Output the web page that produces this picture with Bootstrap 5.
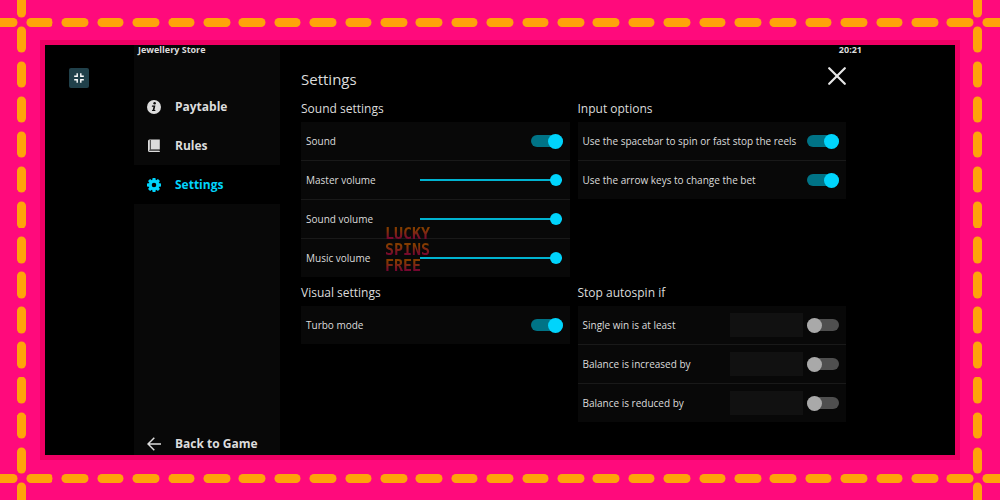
<!DOCTYPE html>
<html lang="en">
<head>
<meta charset="utf-8">
<meta name="viewport" content="width=device-width, initial-scale=1">
<title>Jewellery Store – Settings</title>
<link href="https://cdn.jsdelivr.net/npm/bootstrap@5.3.0/dist/css/bootstrap.min.css" rel="stylesheet">
<style>
  :root {
    --accent: #00d4fc;
    --panel: #080808;
    --dash-h: url("data:image/svg+xml,%3Csvg xmlns='http://www.w3.org/2000/svg' viewBox='0 0 36 9' preserveAspectRatio='none'%3E%3Crect x='4.5' width='27' height='9' rx='4.5' fill='%23ffa30a'/%3E%3C/svg%3E");
    --dash-v: url("data:image/svg+xml,%3Csvg xmlns='http://www.w3.org/2000/svg' viewBox='0 0 9 36' preserveAspectRatio='none'%3E%3Crect y='4.5' width='9' height='27' rx='4.5' fill='%23ffa30a'/%3E%3C/svg%3E");
  }
  body {
    font-family: "Open Sans", "Noto Sans", sans-serif;
    font-size: 10px;
    line-height: 16px;
    color: #dcdcdc;
  }
  /* Stitched frame: whole stitches are fitted between the corner crossings */
  .stitched {
    padding: 22px;
    background-color: #ff0a7c;
    background-image: var(--dash-h), var(--dash-h), var(--dash-v), var(--dash-v);
    background-origin: content-box;
    background-size: 35px 9px, 35px 9px, 9px 35px, 9px 35px;
    background-position: 0 -4px, 0 calc(100% + 5px), -5px 0, calc(100% + 4px) 0;
    background-repeat: round no-repeat, round no-repeat, no-repeat round, no-repeat round;
  }
  .screen { margin: 18px; border: 5px solid #ef0064; background: #000; }
  .gutter { flex: 1 1 0; padding: 23px 0 0 24px; }
  .app { flex: 0 1 732px; }
  .shrink-btn { width: 20px; height: 20px; background: #20404a; border-radius: 2px; }
  .side { width: 146px; flex: none; background: var(--panel); }
  .tiny { font-size: 9px; line-height: 10px; font-weight: 700; }
  .side-nav { padding-top: 32px; }
  .side-link {
    display: flex; align-items: center; gap: 14px; height: 39px; padding-left: 13px;
    color: #dcdcdc; text-decoration: none; font-size: 12px; font-weight: 700; line-height: 18px;
  }
  .side-link.active { color: var(--accent); background: #000; }
  .back-link { height: 22px; }
  .content { padding: 12px 20px 0 21px; }
  .page-title { font-size: 15px; line-height: 24px; font-weight: 400; margin-bottom: 5px; }
  .group-title { font-size: 12px; line-height: 26px; font-weight: 400; margin: 0; }
  .groups { --bs-gutter-y: 3px; }
  .option-list { background: var(--panel); }
  .option { height: 39px; padding: 0 7px 0 5px; border-bottom: 1px solid #191919; }
  .option:last-child { height: 38px; border-bottom: 0; }
  .toggle {
    appearance: none; display: flex; align-items: center; flex: none;
    width: 32px; height: 12px; margin: 0; border-radius: 6px; background: #4f4f4f;
  }
  .toggle::before { content: ""; width: 15px; height: 15px; border-radius: 50%; background: #a9a9a9; flex: none; }
  .toggle:checked { background: #007386; justify-content: flex-end; }
  .toggle:checked::before { background: var(--accent); }
  .volume { appearance: none; width: 142px; height: 12px; margin: 0 1px 0 0; background: none; }
  .volume::-webkit-slider-runnable-track { height: 2px; background: #00b3d0; }
  .volume::-webkit-slider-thumb { appearance: none; width: 12px; height: 12px; margin-top: -5px; border-radius: 50%; background: var(--accent); }
  .amount { width: 73px; height: 24px; border: 0; background: #111; color: inherit; margin-right: 4px; padding: 0 4px; }
  .stamp { top: 104px; left: 84px; font: 700 15px/16px "DejaVu Sans Mono", monospace; pointer-events: none; }
  .stamp span { display: block; color: transparent; background: linear-gradient(#843c00 20%, #740035 85%); -webkit-background-clip: text; background-clip: text; }
</style>
</head>
<body>
<div class="stitched min-vh-100 d-flex flex-column">
<div class="screen flex-fill d-flex">
  <div class="gutter">
    <button type="button" class="shrink-btn border-0 p-0 d-flex align-items-center justify-content-center" aria-label="Exit full screen">
      <svg width="12" height="12" viewBox="0 0 12 12" fill="none" stroke="#fff" stroke-width="1.4"><path d="M4.200 1.200v3H1.200M7.800 1.200v3H10.800M4.200 10.800v-3H1.200M7.800 10.800v-3H10.800"/></svg>
    </button>
  </div>
  <div class="app d-flex">
    <aside class="side d-flex flex-column">
      <div class="tiny ps-1">Jewellery Store</div>
      <nav class="side-nav flex-fill d-flex flex-column">
        <a class="side-link" href="#paytable">
          <svg width="14" height="14" viewBox="0 0 14 14"><circle cx="7" cy="7" r="7" fill="currentColor"/><circle cx="7.600" cy="3.300" r="1.250" fill="#080808"/><path d="M5 5.600h3.400L7.400 10h1.100l-.3 1.100H4.900l.3-1.100h.5l.8-3.300H4.800z" fill="#080808"/></svg>
          Paytable</a>
        <a class="side-link" href="#rules">
          <svg width="14" height="14" viewBox="0 0 14 14"><path d="M2.500.5h10.300v10H3.200q-.9 0-.9.8t.9.8h9.600v1H2.700Q1 13.100 1 11.400V2Q1 .5 2.500.5z" fill="currentColor"/><path d="M3.300 1v9.500" stroke="#080808" stroke-width=".8"/><path d="M3 11.500h9.500" stroke="#777" stroke-width=".7"/></svg>
          Rules</a>
        <a class="side-link active" href="#settings" aria-current="page">
          <svg width="14" height="14" viewBox="-7 -7 14 14"><g fill="currentColor"><path d="M-1.400-7h2.800l.6 3h-4zM-1.400 7h2.800l.6-3h-4z"/><path d="M-1.400-7h2.800l.6 3h-4zM-1.400 7h2.800l.6-3h-4z" transform="rotate(45)"/><path d="M-1.400-7h2.800l.6 3h-4zM-1.400 7h2.800l.6-3h-4z" transform="rotate(90)"/><path d="M-1.400-7h2.800l.6 3h-4zM-1.400 7h2.800l.6-3h-4z" transform="rotate(135)"/></g><circle r="3.700" fill="none" stroke="currentColor" stroke-width="2.800"/></svg>
          Settings</a>
        <a class="side-link back-link mt-auto" href="#game">
          <svg width="14" height="14" viewBox="0 0 14 14" fill="none" stroke="currentColor" stroke-width="1.500"><path d="M14 7H1M7.300.7 1 7l6.300 6.300"/></svg>
          Back to Game</a>
      </nav>
    </aside>
    <main class="flex-fill">
      <div class="tiny text-end pe-1">20:21</div>
      <div class="content">
        <div class="d-flex justify-content-between align-items-start">
          <h1 class="page-title">Settings</h1>
          <button type="button" class="border-0 p-0 bg-transparent d-flex" aria-label="Close">
            <svg width="18" height="18" viewBox="0 0 18 18" stroke="#e6e6e6" stroke-width="2.200" stroke-linecap="round"><path d="M1.200 1.200l15.600 15.600M16.800 1.200 1.200 16.800"/></svg>
          </button>
        </div>
        <div class="row gx-2 groups">
          <section class="col-6">
            <h2 class="group-title">Sound settings</h2>
            <div class="option-list position-relative">
              <div class="stamp position-absolute"><span>LUCKY</span><span>SPINS</span><span>FREE</span></div>
              <div class="option d-flex align-items-center justify-content-between"><label for="sound">Sound</label><input class="toggle" type="checkbox" role="switch" id="sound" checked></div>
              <div class="option d-flex align-items-center justify-content-between"><label for="master">Master volume</label><input class="volume" type="range" id="master" value="100"></div>
              <div class="option d-flex align-items-center justify-content-between"><label for="svol">Sound volume</label><input class="volume" type="range" id="svol" value="100"></div>
              <div class="option d-flex align-items-center justify-content-between"><label for="mvol">Music volume</label><input class="volume" type="range" id="mvol" value="100"></div>
            </div>
          </section>
          <section class="col-6">
            <h2 class="group-title">Input options</h2>
            <div class="option-list">
              <div class="option d-flex align-items-center justify-content-between"><label for="space">Use the spacebar to spin or fast stop the reels</label><input class="toggle" type="checkbox" role="switch" id="space" checked></div>
              <div class="option d-flex align-items-center justify-content-between"><label for="arrows">Use the arrow keys to change the bet</label><input class="toggle" type="checkbox" role="switch" id="arrows" checked></div>
            </div>
          </section>
          <section class="col-6">
            <h2 class="group-title">Visual settings</h2>
            <div class="option-list">
              <div class="option d-flex align-items-center justify-content-between"><label for="turbo">Turbo mode</label><input class="toggle" type="checkbox" role="switch" id="turbo" checked></div>
            </div>
          </section>
          <section class="col-6">
            <h2 class="group-title">Stop autospin if</h2>
            <div class="option-list">
              <div class="option d-flex align-items-center"><label for="win" class="me-auto">Single win is at least</label><input class="amount" type="text" id="win"><input class="toggle" type="checkbox" role="switch" aria-label="Stop on single win"></div>
              <div class="option d-flex align-items-center"><label for="inc" class="me-auto">Balance is increased by</label><input class="amount" type="text" id="inc"><input class="toggle" type="checkbox" role="switch" aria-label="Stop on balance increase"></div>
              <div class="option d-flex align-items-center"><label for="red" class="me-auto">Balance is reduced by</label><input class="amount" type="text" id="red"><input class="toggle" type="checkbox" role="switch" aria-label="Stop on balance reduction"></div>
            </div>
          </section>
        </div>
      </div>
    </main>
  </div>
  <div class="gutter"></div>
</div>
</div>
<script src="https://cdn.jsdelivr.net/npm/bootstrap@5.3.0/dist/js/bootstrap.bundle.min.js"></script>
</body>
</html>
